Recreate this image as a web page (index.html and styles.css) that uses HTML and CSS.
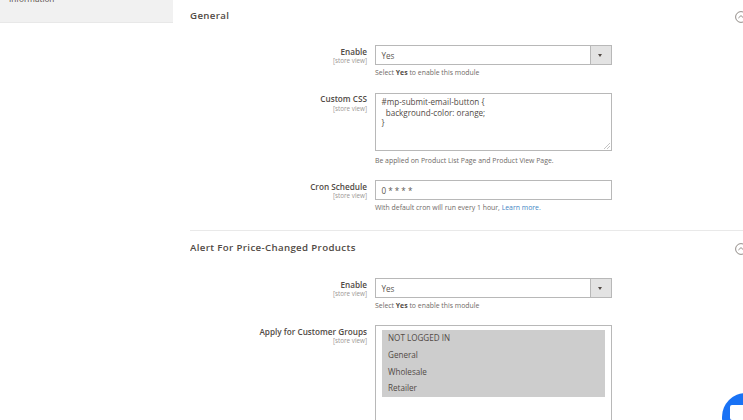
FILE: index.html
```html
<!DOCTYPE html>
<html lang="en">
<head>
<meta charset="utf-8">
<title>Configuration</title>
<link rel="stylesheet" href="styles.css">
</head>
<body>
<div class="page">
  <aside class="sidebar"><span class="side-item">Information</span></aside>
  <main class="main">
    <section class="section first">
      <header class="section-head"><h2>General</h2><svg class="chev" viewBox="0 0 12 12"><circle cx="6" cy="6" r="5.4"/><path d="M3.4 7 6 4.6 8.6 7"/></svg></header>
      <div class="row r-enable">
        <div class="label"><b>Enable</b><small>[store view]</small></div>
        <div class="control">
          <div class="select"><span>Yes</span><i class="arrow"></i></div>
          <p class="help">Select <b>Yes</b> to enable this module</p>
        </div>
      </div>
      <div class="row r-css">
        <div class="label"><b>Custom CSS</b><small>[store view]</small></div>
        <div class="control">
          <div class="textarea"><pre>#mp-submit-email-button {
  background-color: orange;
}</pre><svg class="grip" viewBox="0 0 6 6"><path d="M0 6 6 0M3 6 6 3"/></svg></div>
          <p class="help help-gap">Be applied on Product List Page and Product View Page.</p>
        </div>
      </div>
      <div class="row r-cron">
        <div class="label"><b>Cron Schedule</b><small>[store view]</small></div>
        <div class="control">
          <div class="input">0 * * * *</div>
          <p class="help">With default cron will run every 1 hour, <a href="#">Learn more.</a></p>
        </div>
      </div>
    </section>
    <section class="section second">
      <header class="section-head"><h2>Alert For Price-Changed Products</h2><svg class="chev" viewBox="0 0 12 12"><circle cx="6" cy="6" r="5.4"/><path d="M3.4 7 6 4.6 8.6 7"/></svg></header>
      <div class="row r-enable2">
        <div class="label"><b>Enable</b><small>[store view]</small></div>
        <div class="control">
          <div class="select"><span>Yes</span><i class="arrow"></i></div>
          <p class="help">Select <b>Yes</b> to enable this module</p>
        </div>
      </div>
      <div class="row r-groups">
        <div class="label"><b>Apply for Customer Groups</b><small>[store view]</small></div>
        <div class="control">
          <div class="multi">
            <ul>
              <li>NOT LOGGED IN</li>
              <li>General</li>
              <li>Wholesale</li>
              <li>Retailer</li>
            </ul>
          </div>
        </div>
      </div>
    </section>
  </main>
</div>
<div class="chat"><svg viewBox="0 0 48 48"><circle cx="24" cy="24" r="24" fill="#1972f5"/><path d="M10 12h21a2 2 0 0 1 2 2v11a2 2 0 0 1-2 2h-4l-1 5-6-5H10a2 2 0 0 1-2-2V14a2 2 0 0 1 2-2z" fill="#fff"/></svg></div>
</body>
</html>
```
FILE: styles.css
```css
html, body { margin: 0; padding: 0; height: 100%; overflow: hidden; background: #fff; }
body { font-family: "Open Sans", sans-serif; color: #514a45; position: relative; }
.page { display: flex; align-items: flex-start; height: 420px; overflow: hidden; }
.sidebar { flex: 0 0 173px; height: 23px; box-sizing: border-box; background: #f1f1f1; border-bottom: 1px solid #e8e8e8; overflow: hidden; padding-left: 9px; }
.side-item { display: block; margin-top: -7px; font-size: 8.2px; line-height: 12px; color: #514a45; }
.main { flex: 0 0 570px; margin-left: 17px; overflow: hidden; }
.section-head { display: flex; justify-content: space-between; align-items: center; height: 14px; width: 557px; }
.section-head h2 { margin: 0; font-size: 9.7px; font-weight: 600; letter-spacing: .35px; line-height: 14px; color: #514a45; }
.chev { flex: 0 0 12px; width: 12px; height: 12px; fill: none; stroke: #77706b; stroke-width: .8; margin-top: 1px; }
.first { padding-top: 9px; padding-bottom: 16.5px; border-bottom: 1px solid #e9e9e9; width: 553px; }
.second { padding-top: 10.5px; }
.row { display: flex; }
.label { flex: 0 0 177px; text-align: right; display: flex; flex-direction: column; padding-top: .5px; }
.label b { font-size: 8.2px; line-height: 11px; font-weight: 600; color: #514a45; }
.label small { font-size: 6.3px; line-height: 7px; margin-top: .5px; color: #9a9694; }
.control { width: 237px; margin-left: 8px; }
.r-enable { margin-top: 22.3px; }
.r-css { margin-top: 14.7px; }
.r-cron { margin-top: 14.5px; }
.r-enable2 { margin-top: 23px; }
.r-groups { margin-top: 14px; }
.select, .input { box-sizing: border-box; height: 19.5px; border: 1px solid #b8b8b8; background: #fff; font-size: 8.1px; line-height: 19px; padding-left: 5.5px; color: #5c5651; display: flex; justify-content: space-between; }
.select .arrow { flex: 0 0 20px; background: #e3e3e3; border-left: 1px solid #b8b8b8; position: relative; }
.arrow::after { content: ""; position: absolute; left: 7px; top: 7.5px; border: 2.5px solid transparent; border-top: 3px solid #514a45; border-bottom: 0; }
.help { margin: 3.5px 0 0; font-size: 6.9px; line-height: 10px; color: #6f6a67; }
.help-gap { margin-top: 5px; }
.help b { font-weight: 700; color: #514a45; }
.help a { color: #3f86c4; text-decoration: none; }
.textarea { box-sizing: border-box; height: 58px; border: 1px solid #b8b8b8; padding: 3px 5.5px; position: relative; }
.textarea pre { margin: 0; font-family: "Open Sans", sans-serif; font-size: 8.1px; line-height: 10.6px; color: #514a45; }
.grip { position: absolute; right: 1px; bottom: 1px; width: 6px; height: 6px; fill: none; stroke: #aaa; stroke-width: .7; }
.multi { box-sizing: border-box; height: 110px; border: 1px solid #b8b8b8; padding: 4px 6px; }
.multi ul { list-style: none; margin: 0; padding: 0; background: #cdcdcd; }
.multi li { height: 16.6px; line-height: 16.6px; font-size: 8.1px; padding-left: 6px; color: #514a45; }
.chat { position: absolute; left: 722px; top: 393px; width: 48px; height: 48px; }
.chat svg { display: block; width: 48px; height: 48px; }
```
